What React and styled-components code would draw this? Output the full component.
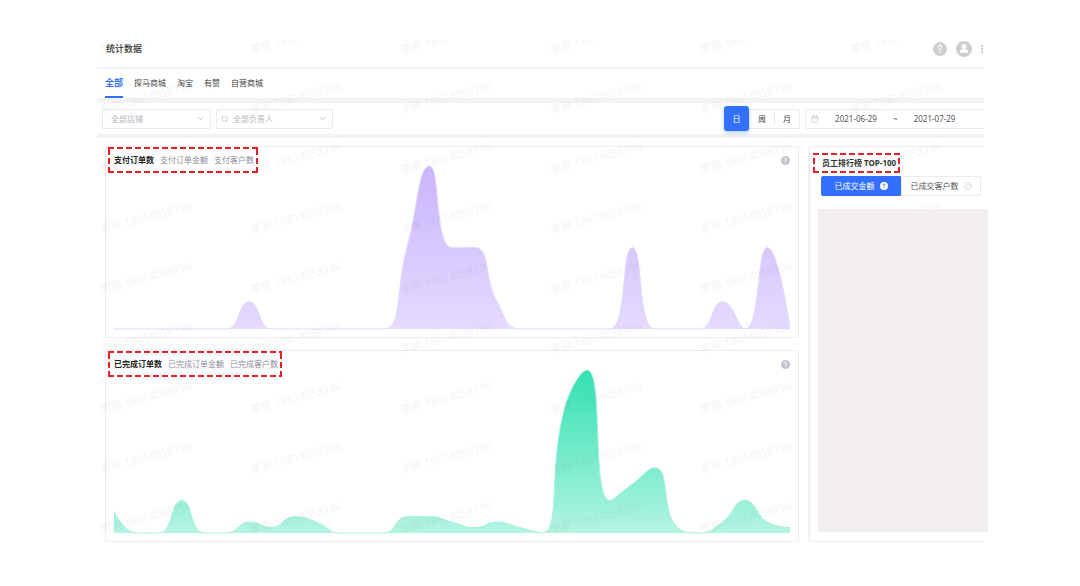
import React, { useId, useState } from "react";
import styled, { createGlobalStyle, css } from "styled-components";
import { BsQuestionCircleFill } from "react-icons/bs";
import { Calendar, ChevronDown, CircleHelp, Search } from "lucide-react";

const GlobalStyle = createGlobalStyle`
  * {
    box-sizing: border-box;
  }

  body {
    margin: 0;
    background: #fff;
    color: #333;
    font-family: "Noto Sans", "Noto Sans CJK SC", sans-serif;
    font-size: 8px;
    line-height: 12px;
  }

  button, input, select {
    font: inherit;
    color: inherit;
    margin: 0;
    padding: 0;
    border: none;
    background: none;
  }
`;

const Page = styled.div`
  padding: 40px 96px 44px 97px;
`;

const Shell = styled.div`
  position: relative;
`;

const Header = styled.header`
  display: flex;
  align-items: center;
  height: 29px;
  padding: 0 0 10px 9px;
  border-bottom: 2px solid #f4f4f5;
`;

const Title = styled.h1`
  flex: 1;
  margin: 0;
  font-size: 9px;
  font-weight: 500;
`;

const HeaderActions = styled.div`
  display: flex;
  align-items: center;
  gap: 9px;
`;

const IconButton = styled.button`
  display: flex;
  color: ${({ $color }) => $color || "#cfcfcf"};
`;

const Tabs = styled.nav`
  display: flex;
  gap: 11px;
  height: 29px;
  padding: 0 8px;
`;

const Tab = styled.a`
  display: flex;
  align-items: center;
  color: #444;
  text-decoration: none;
  border-bottom: 2px solid transparent;

  ${({ $active }) =>
    $active &&
    css`
      color: #3370ff;
      font-size: 9px;
      font-weight: 700;
      border-color: #3370ff;
    `}
`;

const Toolbar = styled.div`
  display: flex;
  align-items: center;
  gap: 5px;
  height: 40px;
  padding-left: 5px;
  border-top: 5px solid #f3f3f5;
  border-bottom: 4px solid #f3f3f5;
`;

const Field = styled.label`
  display: flex;
  align-items: center;
  gap: 4px;
  width: ${({ $width }) => $width};
  height: 20px;
  padding: 0 5px 0 ${({ $indent }) => $indent || "4px"};
  border: 1px solid #ebebee;
  border-radius: 2px;
  color: #b4b6bd;
`;

const Select = styled.select`
  flex: 1;
  min-width: 0;
  appearance: none;
  outline: none;
`;

const Periods = styled.div`
  display: flex;
  align-items: center;
  height: 20px;
  margin-left: auto;
  border: 1px solid #ebebee;
  border-left: none;
  border-radius: 2px;
`;

const Period = styled.button`
  width: 25px;
  height: 12px;
  color: #444;

  & + & {
    border-left: 1px solid ${({ $divided }) => ($divided ? "#e6e6e9" : "transparent")};
  }

  ${({ $active }) =>
    $active &&
    css`
      height: 25px;
      color: #fff;
      background: #3370ff;
      border-radius: 3px;
      box-shadow: 0 2px 4px rgba(51, 112, 255, 0.35);
    `}
`;

const DateRange = styled.div`
  display: flex;
  align-items: center;
  gap: 3px;
  width: 179px;
  height: 20px;
  padding-left: 5px;
  border: 1px solid #ebebee;
  border-right: none;
  border-radius: 2px 0 0 2px;
  color: #555;

  svg {
    color: #c4c6cc;
  }
`;

const DateInput = styled.input`
  width: 68px;
  text-align: center;
  outline: none;
`;

const Content = styled.main`
  display: grid;
  grid-template-columns: minmax(0, 1fr) 175px;
  gap: 10px;
  padding: 8px 0 0 8px;
`;

const Charts = styled.div`
  display: grid;
  gap: 12px;
`;

const Card = styled.section`
  padding: 0 8px 7px 2px;
  border: 1px solid #ededef;
  border-radius: 3px;
  box-shadow: 0 0 1px #ededef;
`;

const CardHead = styled.div`
  display: flex;
  align-items: center;
  justify-content: space-between;
`;

// dashed frame drawn with gradients so the dash length stays under control
const dashed = css`
  --dash: #ea2027 0 6px, transparent 6px 9px;
  background:
    repeating-linear-gradient(90deg, var(--dash)) top / 100% 2px no-repeat,
    repeating-linear-gradient(90deg, var(--dash)) bottom / 100% 2px no-repeat,
    repeating-linear-gradient(0deg, var(--dash)) left / 2px 100% no-repeat,
    repeating-linear-gradient(0deg, var(--dash)) right / 2px 100% no-repeat;
`;

const MetricTabs = styled.div`
  display: flex;
  align-items: center;
  gap: 6px;
  height: 26px;
  padding: 0 4px 0 6px;
  ${dashed}
`;

const MetricTab = styled.button`
  color: ${({ $active }) => ($active ? "#222" : "#8d8d9b")};
  font-weight: ${({ $active }) => ($active ? 700 : 400)};
`;

const ChartSvg = styled.svg`
  display: block;
  width: calc(100% - 6px);
  height: 166px;
  margin: -9px 0 0 6px;
  pointer-events: none;
`;

const RankCard = styled.section`
  display: flex;
  flex-direction: column;
  align-items: flex-start;
  padding: 6px 0 9px 3px;
  border: 1px solid #ededef;
  border-right: none;
  border-radius: 3px 0 0 3px;
  box-shadow: -1px 0 1px #f6f6f7;
`;

const RankTitle = styled.h2`
  display: flex;
  align-items: center;
  height: 20px;
  margin: 0;
  padding: 0 4px 0 9px;
  font-size: 8px;
  font-weight: 700;
  ${dashed}
`;

const RankTabs = styled.div`
  display: flex;
  width: 160px;
  height: 20px;
  margin: 3px 0 13px 8px;
`;

const RankTab = styled.button`
  display: flex;
  flex: 1;
  align-items: center;
  justify-content: center;
  gap: 5px;
  border: 1px solid #ebebee;
  border-radius: 0 2px 2px 0;
  color: #555;

  svg {
    color: #ccc;
  }

  ${({ $active }) =>
    $active &&
    css`
      color: #fff;
      background: #3370ff;
      border-color: #3370ff;
      border-radius: 2px 0 0 2px;

      svg {
        color: #fff;
      }
    `}
`;

const RankBody = styled.div`
  position: relative;
  z-index: 2;
  flex: 1;
  align-self: stretch;
  margin: 0 -4px 0 5px;
  background: #f3efee;
`;

const Watermarks = styled.div`
  position: absolute;
  inset: 0;
  z-index: 1;
  display: grid;
  grid-template-columns: repeat(6, 150px);
  grid-auto-rows: 60px;
  align-content: start;
  overflow: hidden;
  opacity: 0.04;
  pointer-events: none;
`;

const Watermark = styled.span`
  color: #000;
  font-size: 11px;
  white-space: nowrap;
  transform: translate(2px, -8px) rotate(-15deg);
  transform-origin: 45px 6px;
`;

const CHART_WIDTH = 676;
const CHART_HEIGHT = 166;

const clamp = (value, a, b) => Math.max(Math.min(a, b), Math.min(Math.max(a, b), value));

// bezier spline whose control points never leave the box of the neighbouring points
const smoothPath = (points) => {
  let path = `M${points[0].join(" ")}`;
  let out = points[0];

  for (let i = 1; i < points.length; i++) {
    const [px, py] = points[i - 1];
    const [x, y] = points[i];
    let into = [x, y];
    let next = [x, y];

    if (i < points.length - 1) {
      const [nx, ny] = points[i + 1];
      const lenPrev = Math.hypot(x - px, y - py);
      const lenNext = Math.hypot(nx - x, ny - y);
      const ratio = lenNext / (lenNext + lenPrev);

      next = [
        clamp(x + (nx - px) * 0.5 * ratio, x, nx),
        clamp(y + (ny - py) * 0.5 * ratio, y, ny),
      ];
      into = [
        clamp(x - ((next[0] - x) * lenPrev) / lenNext, px, x),
        clamp(y - ((next[1] - y) * lenPrev) / lenNext, py, y),
      ];
      next = [
        x + ((x - into[0]) * lenNext) / lenPrev,
        y + ((y - into[1]) * lenNext) / lenPrev,
      ];
    }

    path += `C${out.join(" ")} ${into.join(" ")} ${x} ${y}`;
    out = next;
  }

  return path;
};

const AreaChart = ({ data, max, from, to, line, label }) => {
  const id = useId();
  const base = CHART_HEIGHT - 1;
  const points = data.map((value, i) => [
    (i * CHART_WIDTH) / (data.length - 1),
    base - (value / max) * 163,
  ]);
  const path = smoothPath(points);

  return (
    <ChartSvg
      viewBox={`0 0 ${CHART_WIDTH} ${CHART_HEIGHT}`}
      preserveAspectRatio="none"
      role="img"
      aria-label={label}
    >
      <defs>
        <linearGradient id={id} x1="0" y1="0" x2="0" y2="1">
          <stop offset="0" stopColor={from} />
          <stop offset="1" stopColor={to} />
        </linearGradient>
      </defs>
      <path d={`${path}L${CHART_WIDTH} ${base}L0 ${base}Z`} fill={`url(#${id})`} />
      <path d={path} fill="none" stroke={line} strokeWidth="1" />
    </ChartSvg>
  );
};

const UserIcon = () => (
  <svg width="16" height="16" viewBox="0 0 16 16" aria-hidden="true">
    <circle cx="8" cy="8" r="8" fill="currentColor" />
    <circle cx="8" cy="5.6" r="2.4" fill="#fff" />
    <path d="M4.2 11.8V10c0-1.2.8-2 2-2h3.6c1.2 0 2 .8 2 2v1.8z" fill="#fff" />
  </svg>
);

const MoreIcon = () => (
  <svg width="3" height="8" viewBox="0 0 3 8" aria-hidden="true">
    <path d="M0 1h2M0 4h2M0 7h2" stroke="#999" />
  </svg>
);

const ChartCard = ({ metrics, ...chart }) => {
  const [active, setActive] = useState(metrics[0]);

  return (
    <Card>
      <CardHead>
        <MetricTabs>
          {metrics.map((metric) => (
            <MetricTab key={metric} $active={metric === active} onClick={() => setActive(metric)}>
              {metric}
            </MetricTab>
          ))}
        </MetricTabs>
        <IconButton $color="#c3c3cc" aria-label="说明">
          <BsQuestionCircleFill size={9} />
        </IconButton>
      </CardHead>
      <AreaChart label={active} {...chart} />
    </Card>
  );
};

const shops = ["全部", "探马商城", "淘宝", "有赞", "自营商城"];
const periods = ["日", "周", "月"];

const paid = [
  0, 0, 0, 0, 0, 0, 1, 0, 0, 0, 0, 0, 0, 3, 6, 3, 3, 1, 0, 0, 0, 0, 0, 3, 0, 0, 0, 1, 0, 3, 0,
];
const finished = [
  4, 0, 0, 6, 0, 0, 2, 1, 3, 2, 0, 0, 0, 3, 3, 2, 1, 2, 1, 0, 23, 30, 6, 9, 12, 1, 0, 2, 6, 2, 1,
];

const App = () => {
  const [period, setPeriod] = useState("日");

  return (
    <Page>
      <GlobalStyle />
      <Shell>
        <Header>
          <Title>统计数据</Title>
          <HeaderActions>
            <IconButton aria-label="帮助">
              <BsQuestionCircleFill size={14} />
            </IconButton>
            <IconButton aria-label="账户">
              <UserIcon />
            </IconButton>
            <IconButton aria-label="更多">
              <MoreIcon />
            </IconButton>
          </HeaderActions>
        </Header>

        <Tabs>
          {shops.map((shop, i) => (
            <Tab key={shop} href="#" $active={i === 0}>
              {shop}
            </Tab>
          ))}
        </Tabs>

        <Toolbar>
          <Field $width="109px" $indent="8px">
            <Select aria-label="店铺">
              <option>全部店铺</option>
            </Select>
            <ChevronDown size={9} />
          </Field>
          <Field $width="117px">
            <Search size={8} />
            <Select aria-label="负责人">
              <option>全部负责人</option>
            </Select>
            <ChevronDown size={9} />
          </Field>
          <Periods>
            {periods.map((name) => (
              <Period
                key={name}
                $active={name === period}
                $divided={name === "月"}
                onClick={() => setPeriod(name)}
              >
                {name}
              </Period>
            ))}
          </Periods>
          <DateRange>
            <Calendar size={8} />
            <DateInput aria-label="开始日期" defaultValue="2021-06-29" />
            ~
            <DateInput aria-label="结束日期" defaultValue="2021-07-29" />
          </DateRange>
        </Toolbar>

        <Content>
          <Charts>
            <ChartCard
              metrics={["支付订单数", "支付订单金额", "支付客户数"]}
              data={paid}
              max={6}
              from="#c9b5fd"
              to="#e4dbfe"
              line="#e2d9fe"
            />
            <ChartCard
              metrics={["已完成订单数", "已完成订单金额", "已完成客户数"]}
              data={finished}
              max={30}
              from="#33e0b0"
              to="#b3f4e2"
              line="#a5f0dc"
            />
          </Charts>

          <RankCard>
            <RankTitle>员工排行榜 TOP-100</RankTitle>
            <RankTabs>
              <RankTab $active>
                已成交金额
                <BsQuestionCircleFill size={8} />
              </RankTab>
              <RankTab>
                已成交客户数
                <CircleHelp size={8} />
              </RankTab>
            </RankTabs>
            <RankBody />
          </RankCard>
        </Content>

        <Watermarks aria-hidden="true">
          {Array.from({ length: 54 }, (_, i) => (
            <Watermark key={i}>李爽 18614058196</Watermark>
          ))}
        </Watermarks>
      </Shell>
    </Page>
  );
};

export default App;
